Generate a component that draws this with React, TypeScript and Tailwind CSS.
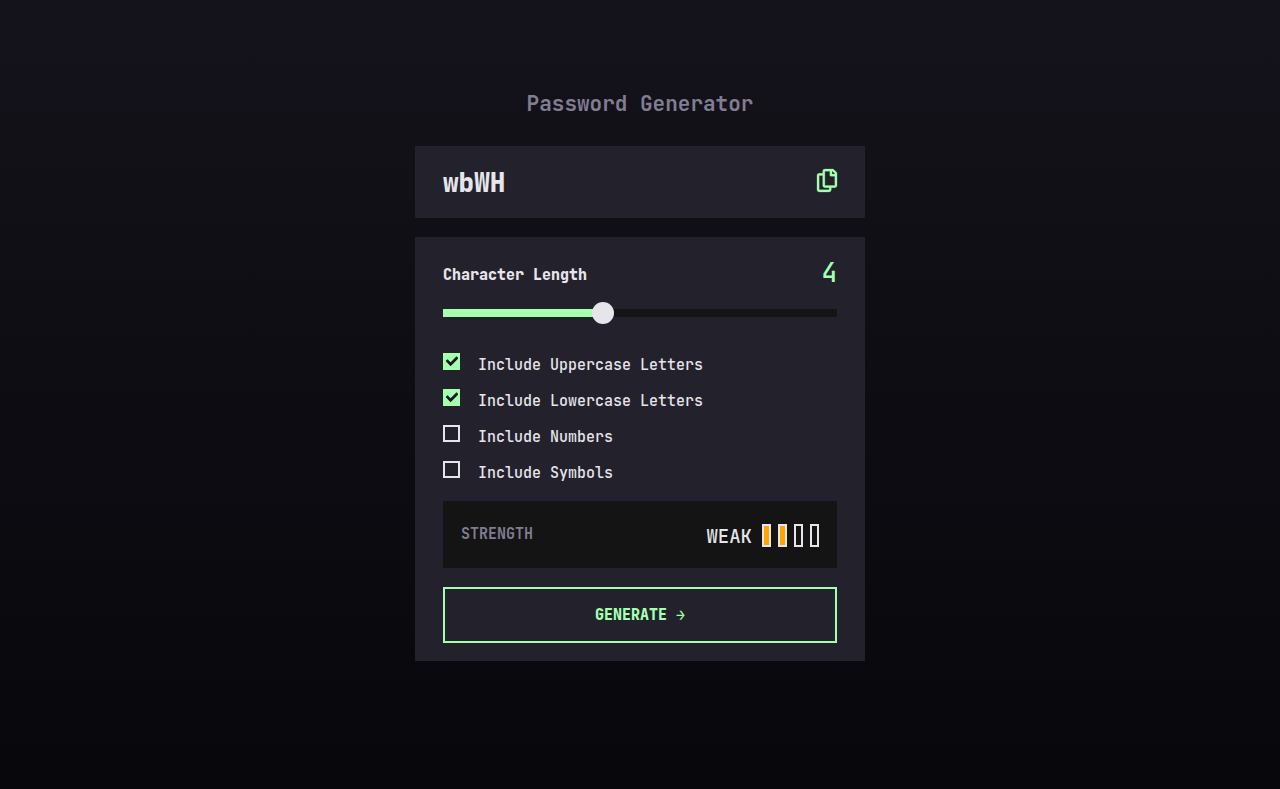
import { useState } from "react";

const MAX_LENGTH = 10;

function CopyIcon() {
  return (
    <svg
      className="h-[23px] w-5 overflow-visible"
      viewBox="0 0 21 24"
      fill="currentColor"
      stroke="currentColor"
      strokeWidth="0.3"
      aria-hidden="true"
    >
      <path d="M20.341 3.091 17.909.659A2.25 2.25 0 0 0 16.319 0H8.25A2.25 2.25 0 0 0 6 2.25V4.5H2.25A2.25 2.25 0 0 0 0 6.75v15A2.25 2.25 0 0 0 2.25 24h10.5A2.25 2.25 0 0 0 15 21.75V19.5h3.75A2.25 2.25 0 0 0 21 17.25V4.682a2.25 2.25 0 0 0-.659-1.591ZM12.469 21.75H2.53a.281.281 0 0 1-.281-.281V7.03a.281.281 0 0 1 .281-.281H6v10.5a2.25 2.25 0 0 0 2.25 2.25h4.5v1.969a.282.282 0 0 1-.281.281Zm6-4.5H8.53a.281.281 0 0 1-.281-.281V2.53a.281.281 0 0 1 .281-.281H13.5v4.125c0 .621.504 1.125 1.125 1.125h4.125v9.469a.282.282 0 0 1-.281.281Zm.281-12h-3v-3h.451c.075 0 .147.03.2.082L18.667 4.6a.283.283 0 0 1 .083.199v.451Z" />
    </svg>
  );
}

function Option({ label, initial }: { label: string; initial: boolean }) {
  const [checked, setChecked] = useState(initial);
  return (
    <label className="flex cursor-pointer items-start gap-[18px]">
      <span className="grid">
        <input
          type="checkbox"
          checked={checked}
          onChange={() => setChecked(!checked)}
          className="col-start-1 row-start-1 size-[17px] appearance-none border-2 border-[#e6e5ea] checked:border-[#a4ffaf] checked:bg-[#a4ffaf]"
        />
        {checked && (
          <svg
            className="pointer-events-none col-start-1 row-start-1 h-[11px] w-[13px] place-self-center"
            viewBox="0 1 14 12"
            fill="none"
            stroke="#18171f"
            strokeWidth="3"
            aria-hidden="true"
          >
            <path d="M1.607 5.522 6.04 9.956 13.596 2.4" />
          </svg>
        )}
      </span>
      <span className="pt-0.5 leading-5">{label}</span>
    </label>
  );
}

export default function App() {
  const [length, setLength] = useState(4);
  const percent = (length / MAX_LENGTH) * 100;

  return (
    <main className="min-h-screen bg-linear-to-b from-[#14131b] to-[#08070b] px-4 pt-[90px] pb-16 font-['JetBrains_Mono','DejaVu_Sans_Mono',monospace] text-[15px] font-medium text-[#e6e5ea]">
      <div className="mx-auto max-w-[450px]">
        <h1 className="text-center text-[21px] leading-7 font-semibold text-[#817d92]">Password Generator</h1>

        <section className="mt-7 flex h-[72px] items-center justify-between bg-[#23212b] px-7">
          <output className="text-[26px] font-extrabold">wbWH</output>
          <button type="button" aria-label="Copy password" className="mb-[3px] text-[#a4ffaf]">
            <CopyIcon />
          </button>
        </section>

        <form className="mt-[19px] bg-[#23212b] px-7 pt-5 pb-[18px]" onSubmit={(e) => e.preventDefault()}>
          <div className="flex items-center justify-between">
            <label htmlFor="length" className="pt-1 font-extrabold">
              Character Length
            </label>
            <span className="text-[26px] leading-8 text-[#a4ffaf]">{length}</span>
          </div>
          <input
            id="length"
            type="range"
            min={0}
            max={MAX_LENGTH}
            value={length}
            onChange={(e) => setLength(Number(e.target.value))}
            style={{
              backgroundImage: `linear-gradient(to right, #a4ffaf ${percent}%, #141414 ${percent}%)`,
            }}
            className="mt-5 block h-2 w-full cursor-pointer appearance-none [&::-webkit-slider-thumb]:size-[22px] [&::-webkit-slider-thumb]:appearance-none [&::-webkit-slider-thumb]:rounded-full [&::-webkit-slider-thumb]:bg-[#e6e5ea]"
          />

          <div className="mt-9 space-y-[14px]">
            <Option label="Include Uppercase Letters" initial={true} />
            <Option label="Include Lowercase Letters" initial={true} />
            <Option label="Include Numbers" initial={false} />
            <Option label="Include Symbols" initial={false} />
          </div>

          <div className="mt-[18px] flex h-[67px] items-center justify-between bg-[#141414] px-[18px]">
            <span className="font-bold text-[#817d92]">STRENGTH</span>
            <div className="flex items-center gap-[10px] pt-0.5">
              <span className="pt-1 text-[19px]">WEAK</span>
              <div className="flex gap-[7px]">
                <span className="h-[23px] w-[9px] border-2 border-[#e6e5ea] bg-[#ffa500]" />
                <span className="h-[23px] w-[9px] border-2 border-[#e6e5ea] bg-[#ffa500]" />
                <span className="h-[23px] w-[9px] border-2 border-[#e6e5ea]" />
                <span className="h-[23px] w-[9px] border-2 border-[#e6e5ea]" />
              </div>
            </div>
          </div>

          <button
            type="submit"
            className="mt-[19px] h-14 w-full border-2 border-[#a4ffaf] font-extrabold text-[#a4ffaf]"
          >
            GENERATE →
          </button>
        </form>
      </div>
    </main>
  );
}
